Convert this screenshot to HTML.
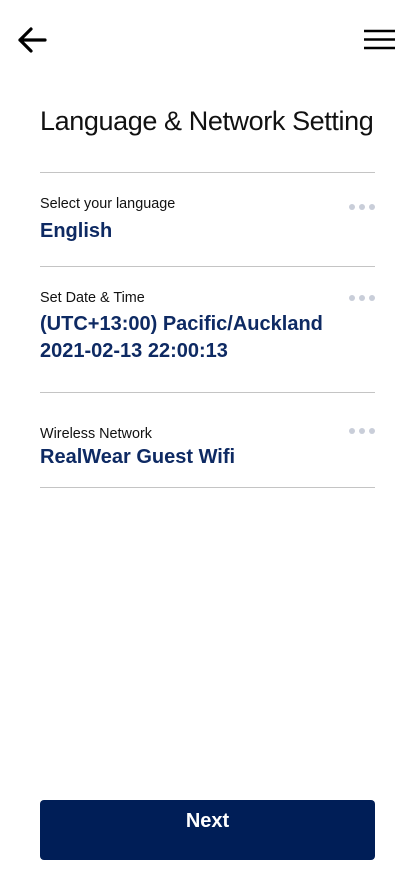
<!DOCTYPE html>
<html><head><meta charset="utf-8"><style>
*{margin:0;padding:0;box-sizing:border-box}
body{width:414px;height:896px;background:#fff;font-family:"Liberation Sans",sans-serif;position:relative;overflow:hidden}
.a{position:absolute;white-space:nowrap}
.line{position:absolute;left:40px;width:335px;height:1px;background:#c4c4c4}
.lab{font-size:14.4px;color:#111}
.val{font-size:20px;font-weight:bold;color:#0e2a63;line-height:27px}
.dots{position:absolute;left:349px;width:26px;height:6px}
.dots i{position:absolute;top:0;width:6px;height:6px;border-radius:50%;background:#c9ced9}
</style></head><body>
<svg class="a" style="left:16px;top:26px" width="32" height="28" viewBox="0 0 32 28"><path d="M29 14H4M15 3L4 14l11 11" fill="none" stroke="#000" stroke-width="3.2" stroke-linecap="round" stroke-linejoin="round"/></svg>
<svg class="a" style="left:364px;top:29px" width="32" height="21"><path d="M0 2h31M0 10.5h31M0 19h31" stroke="#000" stroke-width="2.6"/></svg>
<div class="a" style="left:40px;top:106px;font-size:27px;color:#111;letter-spacing:-0.4px">Language &amp; Network Setting</div>
<div class="line" style="top:172px"></div>
<div class="a lab" style="left:40px;top:196px">Select your language</div>
<div class="a val" style="left:40px;top:218px">English</div>
<div class="dots" style="top:204px"><i style="left:0"></i><i style="left:10px"></i><i style="left:20px"></i></div>
<div class="line" style="top:266px"></div>
<div class="a lab" style="left:40px;top:290px">Set Date &amp; Time</div>
<div class="a val" style="left:40px;top:311px">(UTC+13:00) Pacific/Auckland<br>2021-02-13 22:00:13</div>
<div class="dots" style="top:295px"><i style="left:0"></i><i style="left:10px"></i><i style="left:20px"></i></div>
<div class="line" style="top:392px"></div>
<div class="a lab" style="left:40px;top:426px">Wireless Network</div>
<div class="a val" style="left:40px;top:444px">RealWear Guest Wifi</div>
<div class="dots" style="top:428px"><i style="left:0"></i><i style="left:10px"></i><i style="left:20px"></i></div>
<div class="line" style="top:487px"></div>
<div class="a" style="left:40px;top:800px;width:335px;height:60px;background:#001e57;border-radius:4px;color:#fff;font-weight:bold;font-size:20px;text-align:center;line-height:42px">Next</div>
</body></html>
